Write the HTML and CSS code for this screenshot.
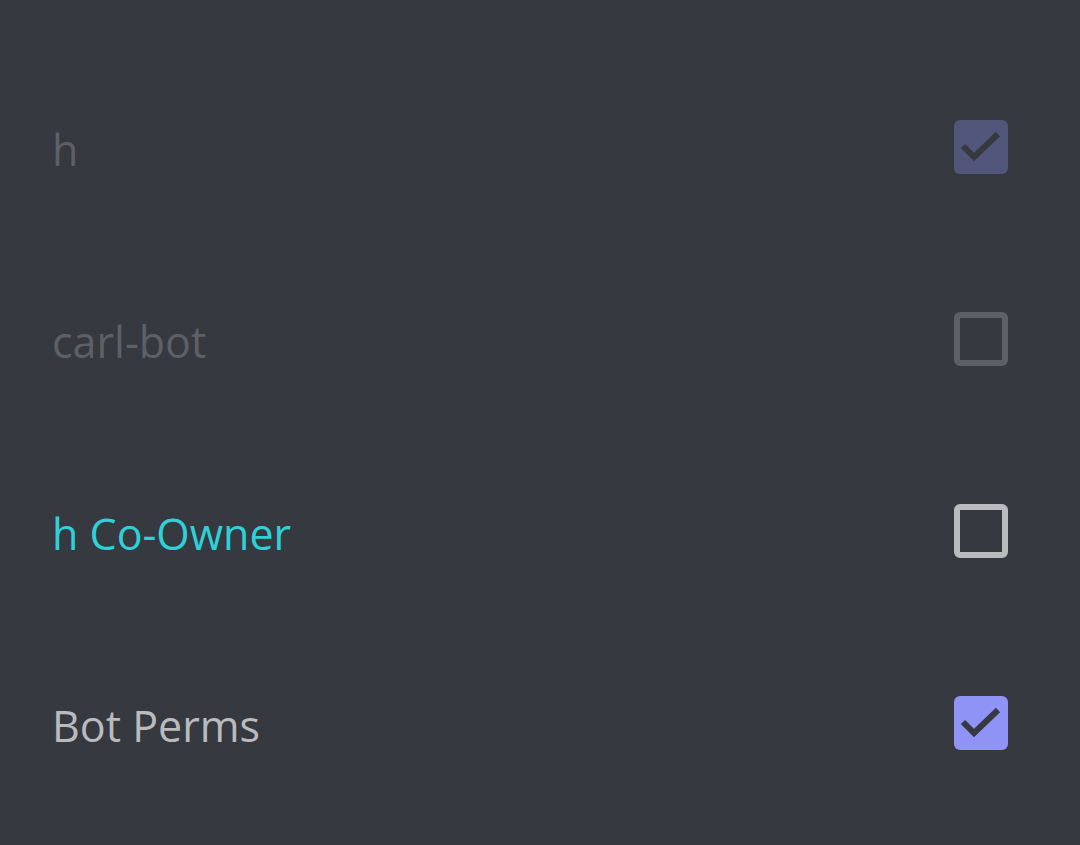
FILE: index.html
```html
<!DOCTYPE html>
<html>
<head>
<meta charset="utf-8">
<link rel="stylesheet" href="styles.css">
</head>
<body>
<div class="list">
  <div class="row">
    <span class="name muted">h</span>
    <span class="box checked disabled"><svg viewBox="0 0 54 54"><polyline points="9,26 20,37 44,14"/></svg></span>
  </div>
  <div class="row">
    <span class="name muted">carl-bot</span>
    <span class="box unchecked disabled"></span>
  </div>
  <div class="row">
    <span class="name cyan">h Co-Owner</span>
    <span class="box unchecked"></span>
  </div>
  <div class="row">
    <span class="name light">Bot Perms</span>
    <span class="box checked"><svg viewBox="0 0 54 54"><polyline points="9,26 20,37 44,14"/></svg></span>
  </div>
</div>
</body>
</html>
```
FILE: styles.css
```css
html, body {
  margin: 0;
  padding: 0;
  background: #36393f;
  width: 1080px;
  height: 845px;
  overflow: hidden;
}
.list {
  display: flex;
  flex-direction: column;
  padding-top: 51px;
}
.row {
  height: 192px;
  display: flex;
  align-items: center;
  justify-content: space-between;
  padding: 0 72px 0 52px;
}
.name {
  font-family: "Open Sans", sans-serif;
  font-size: 43px;
  line-height: 1;
  padding-top: 4px;
}
.muted { color: #5d6066; }
.cyan { color: #2fd1d8; }
.light { color: #b9bbbe; }
.box {
  width: 54px;
  height: 54px;
  box-sizing: border-box;
  border-radius: 6px;
  display: block;
}
.box svg {
  width: 54px;
  height: 54px;
  display: block;
}
.box polyline {
  fill: none;
  stroke: #36393f;
  stroke-width: 6;
}
.checked { background: #8e93f5; }
.checked.disabled { background: #51567a; }
.unchecked { border: 6px solid #b9bbbe; }
.unchecked.disabled { border-color: #5d6066; }
```
